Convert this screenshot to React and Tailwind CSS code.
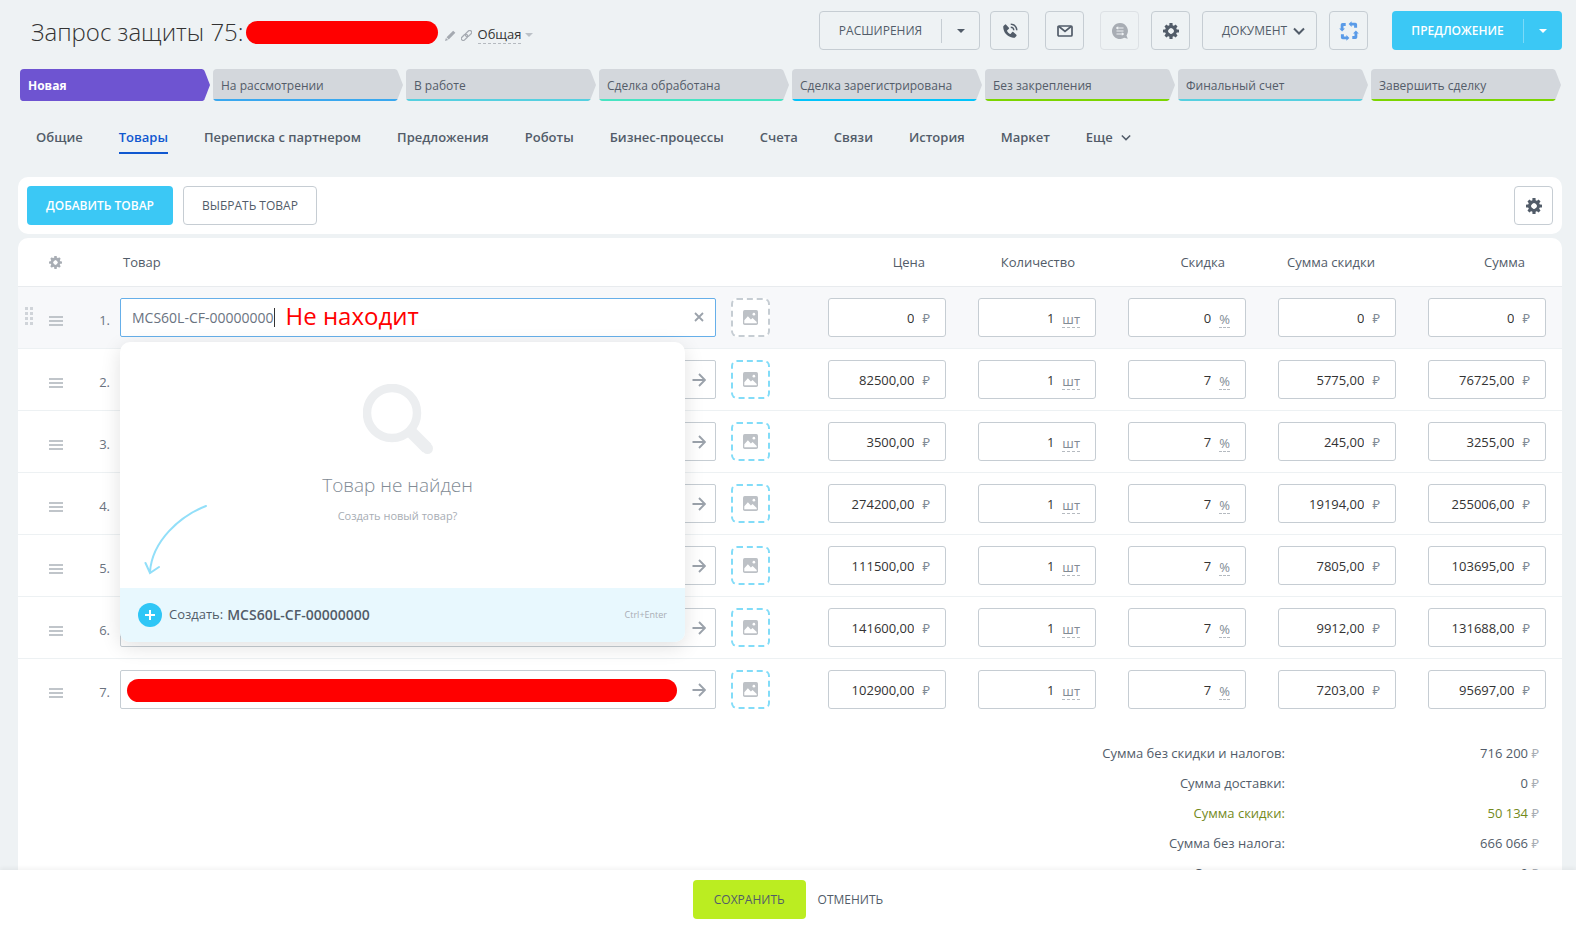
import { useState } from "react";
import { BiSolidPhoneCall } from "react-icons/bi";
import clsx from "clsx";

const stages = [
  { name: "Новая", color: "bg-[#6e54d1]", active: true },
  { name: "На рассмотрении", color: "bg-[#39a8ef]" },
  { name: "В работе", color: "bg-[#55d0e0]" },
  { name: "Сделка обработана", color: "bg-[#47e4c2]" },
  { name: "Сделка зарегистрирована", color: "bg-[#00c4fb]" },
  { name: "Без закрепления", color: "bg-[#7bd500]" },
  { name: "Финальный счет", color: "bg-[#55d0e0]" },
  { name: "Завершить сделку", color: "bg-[#7bd500]" },
];

const tabs = [
  "Общие",
  "Товары",
  "Переписка с партнером",
  "Предложения",
  "Роботы",
  "Бизнес-процессы",
  "Счета",
  "Связи",
  "История",
  "Маркет",
];

const rows = [
  { price: "0", count: "1", discount: "0", discountSum: "0", sum: "0" },
  { price: "82500,00", count: "1", discount: "7", discountSum: "5775,00", sum: "76725,00" },
  { price: "3500,00", count: "1", discount: "7", discountSum: "245,00", sum: "3255,00" },
  { price: "274200,00", count: "1", discount: "7", discountSum: "19194,00", sum: "255006,00" },
  { price: "111500,00", count: "1", discount: "7", discountSum: "7805,00", sum: "103695,00" },
  { price: "141600,00", count: "1", discount: "7", discountSum: "9912,00", sum: "131688,00" },
  { price: "102900,00", count: "1", discount: "7", discountSum: "7203,00", sum: "95697,00" },
];

const columns = [
  { key: "price", title: "Цена", unit: "₽" },
  { key: "count", title: "Количество", unit: "шт", select: true },
  { key: "discount", title: "Скидка", unit: "%", select: true },
  { key: "discountSum", title: "Сумма скидки", unit: "₽" },
  { key: "sum", title: "Сумма", unit: "₽" },
];

const totals = [
  { label: "Сумма без скидки и налогов:", value: "716 200" },
  { label: "Сумма доставки:", value: "0" },
  { label: "Сумма скидки:", value: "50 134", green: true },
  { label: "Сумма без налога:", value: "666 066" },
  { label: "Сумма налога:", value: "0" },
];

const Gear = ({ className }) => (
  <svg viewBox="0 0 16 16" className={className} fill="currentColor">
    {[0, 45, 90, 135].map((angle) => (
      <rect key={angle} x="6.4" y="0" width="3.2" height="16" rx="0.6" transform={`rotate(${angle} 8 8)`} mask="url(#gear-hole)" />
    ))}
    <mask id="gear-hole">
      <rect width="16" height="16" fill="white" />
      <circle cx="8" cy="8" r="3" fill="black" />
    </mask>
    <circle cx="8" cy="8" r="4.5" fill="none" stroke="currentColor" strokeWidth="3" />
  </svg>
);

const Caret = ({ className }) => (
  <svg viewBox="0 0 8 4" className={className} fill="currentColor">
    <path d="M0 0h8L4 4z" />
  </svg>
);

const Chevron = ({ className, width = 2 }) => (
  <svg viewBox="0 0 12 8" className={className} fill="none" stroke="currentColor" strokeWidth={width}>
    <path d="M1 1.5l5 5 5-5" />
  </svg>
);

const MailIcon = () => (
  <svg viewBox="0 0 16 12" className="w-4 h-3" fill="none" stroke="currentColor" strokeWidth="1.7">
    <rect x="1" y="1" width="14" height="10" rx="1" />
    <path d="M2 1.5l6 5 6-5" />
  </svg>
);

const ChatIcon = () => (
  <svg viewBox="0 0 16 16" className="w-4 h-4">
    <path d="M8 0a8 8 0 1 0 4.2 14.8l3.6.9-1.3-3.2A8 8 0 0 0 8 0z" fill="#a8adb4" />
    <path d="M4.5 5h7M4.5 8h7M4.5 11h7" fill="none" stroke="#eef2f4" strokeWidth="1.1" />
    <path d="M6.2 3.3v3.4L3.8 5zM9.8 9.3v3.4l2.4-1.7z" fill="#eef2f4" />
  </svg>
);

const SyncIcon = () => (
  <svg viewBox="0 0 20 20" className="w-5 h-5">
    {[0, 90, 180, 270].map((angle) => (
      <g key={angle} transform={`rotate(${angle} 10 10)`} fill="#5a9be8">
        <path d="M12 1.7h4.3a1.8 1.8 0 0 1 1.8 1.8v3.2h-3V4.5H12z" />
        <path d="M12.6 0.2v5.8L9.6 3.1z" />
      </g>
    ))}
  </svg>
);

const PhotoIcon = () => (
  <svg viewBox="0 0 16 16" className="w-[15px] h-[15px]">
    <rect width="16" height="16" rx="1.8" fill="#bdc1c6" />
    <circle cx="11.6" cy="4.4" r="1.4" fill="#fff" />
    <path d="M1.4 14.2v-3.4L5.2 6.6l3.2 3.6 1.8-1.6 4.4 4.2v1.4z" fill="#fff" />
  </svg>
);

const ArrowRight = () => (
  <svg viewBox="0 0 14 14" className="w-[14px] h-[14px]" fill="none" stroke="#9ba2ab" strokeWidth="1.9">
    <path d="M0.5 7h12M7 1l6 6-6 6" />
  </svg>
);

const SquareButton = ({ label, className, children }) => (
  <button
    aria-label={label}
    className={clsx(
      "flex items-center justify-center w-[39px] h-[39px] border rounded-[4px] text-[#525c69]",
      className || "border-[#c6cdd3]"
    )}
  >
    {children}
  </button>
);

const Header = () => (
  <header className="flex items-start justify-between pt-[11px] pr-[14px] pl-[31px]">
    <div className="flex items-center h-[42px]">
      <h1 className="text-[24px] font-light text-[#333]">Запрос защиты 75:</h1>
      <span className="w-[192px] h-[23px] ml-[2px] bg-[#f00] rounded-full"></span>
      <div className="flex items-center mt-[6px] ml-[7px] text-[#a5aab1]">
        <svg viewBox="0 0 12 12" className="w-[11px] h-[11px]" fill="currentColor">
          <path d="M0 12l1-3.4L3.4 11zM1.7 7.9L8.9.7l2.4 2.4-7.2 7.2z" />
        </svg>
        <svg viewBox="0 0 12 12" className="w-[11px] h-[11px] ml-[5px]" fill="none" stroke="currentColor" strokeWidth="1.3">
          <rect x="4.2" y="1.8" width="8" height="4.2" rx="2.1" transform="rotate(-45 8.2 3.9)" />
          <rect x="-0.2" y="5.9" width="8" height="4.2" rx="2.1" transform="rotate(-45 3.8 8)" />
        </svg>
        <button className="ml-[6px] text-[13px] leading-[17px] text-[#333] border-b border-dashed border-[#b5bac0]">
          Общая
        </button>
        <Caret className="w-2 h-1 ml-1 text-[#bcc1c7]" />
      </div>
    </div>
    <div className="flex text-[12px] text-[#525c69]">
      <div className="flex items-center h-[39px] w-[161px] border border-[#c6cdd3] rounded-[4px]">
        <button className="flex-1 h-full">РАСШИРЕНИЯ</button>
        <span className="w-px h-6 bg-[#c6cdd3]"></span>
        <button aria-label="Список расширений" className="flex items-center justify-center w-[37px] h-full">
          <Caret className="w-2 h-1" />
        </button>
      </div>
      <div className="flex gap-4 ml-[10px]">
        <SquareButton label="Позвонить">
          <BiSolidPhoneCall className="w-[18px] h-[18px]" />
        </SquareButton>
        <SquareButton label="Написать">
          <MailIcon />
        </SquareButton>
        <SquareButton label="Чат" className="border-[#dde1e5]">
          <ChatIcon />
        </SquareButton>
      </div>
      <div className="flex gap-3 ml-3">
        <SquareButton label="Настройки">
          <Gear className="w-4 h-4" />
        </SquareButton>
        <button className="flex items-center justify-center gap-[6px] w-[115px] h-[39px] pl-2 border border-[#c6cdd3] rounded-[4px]">
          ДОКУМЕНТ
          <Chevron className="w-3 h-2" />
        </button>
        <SquareButton label="Синхронизация">
          <SyncIcon />
        </SquareButton>
      </div>
      <div className="flex items-center h-[39px] w-[170px] ml-6 font-semibold text-white bg-[#3bc8f5] rounded-[4px]">
        <button className="flex-1 h-full">ПРЕДЛОЖЕНИЕ</button>
        <span className="w-px h-6 bg-[#7bdaf8]"></span>
        <button aria-label="Другие документы" className="flex items-center justify-center w-[38px] h-full">
          <Caret className="w-2 h-1" />
        </button>
      </div>
    </div>
  </header>
);

const Stages = () => (
  <div className="grid grid-cols-8 gap-[3px] mt-4 pr-[15px] pl-5">
    {stages.map((stage) => (
      <button
        key={stage.name}
        className={clsx(
          "flex flex-col h-8 overflow-hidden text-[12px] text-left rounded-l-[4px]",
          "[clip-path:polygon(0_0,calc(100%_-_8px)_0,calc(100%_-_6px)_1px,calc(100%_-_5px)_3px,100%_50%,calc(100%_-_5px)_29px,calc(100%_-_6px)_31px,calc(100%_-_8px)_100%,0_100%)]",
          stage.active ? "bg-[#6e54d1] text-white font-bold" : "bg-[#d3d7dc] text-[#535c69] font-medium"
        )}
      >
        <span className="flex items-center flex-1 px-2 pt-1 whitespace-nowrap">{stage.name}</span>
        <span className={clsx("w-full h-[2px]", stage.color)}></span>
      </button>
    ))}
  </div>
);

const Tabs = () => (
  <nav className="flex gap-9 mt-[21px] pl-9 text-[13px] font-semibold leading-[30px] text-[#525c69]">
    {tabs.map((tab) => (
      <a
        key={tab}
        href="#"
        className={clsx("border-b-2", tab === "Товары" ? "border-[#1058d0] text-[#1058d0]" : "border-transparent")}
      >
        {tab}
      </a>
    ))}
    <button className="flex items-center gap-2 h-[30px]">
      Еще
      <Chevron className="w-[10px] h-[7px]" width={1.8} />
    </button>
  </nav>
);

const ProductPopup = ({ query }) => (
  <div className="absolute top-[43px] -left-px z-10 w-[565px] overflow-hidden bg-white rounded-[10px] shadow-[0_5px_20px_rgba(0,0,0,0.12)]">
    <div className="relative flex flex-col items-center h-[246px] pt-[42px] pr-[10px]">
      <svg viewBox="0 0 70 70" className="w-[70px] h-[70px]" fill="none" stroke="#eceef0">
        <circle cx="29" cy="29" r="25" strokeWidth="8.5" />
        <path d="M48 48L64 64" strokeWidth="12" />
        <path d="M60 60L64.5 64.5" strokeWidth="11" strokeLinecap="round" />
      </svg>
      <p className="mt-[18px] text-[19px] leading-[26px] font-light text-[#828b95]">Товар не найден</p>
      <p className="mt-[9px] text-[11px] leading-[18px] text-[#a8adb4]">Создать новый товар?</p>
      <svg
        viewBox="0 0 64 70"
        className="absolute left-6 top-[163px] w-16 h-[70px]"
        fill="none"
        stroke="#92dff9"
        strokeWidth="2"
        strokeLinecap="round"
      >
        <path d="M62 1C36 11 8 36 6 67M1.5 58L6 68l9-6" />
      </svg>
    </div>
    <button className="flex items-center w-full h-[54px] px-[18px] text-[13px] text-[#525c69] bg-[#e8f8fe]">
      <span className="flex items-center justify-center w-6 h-6 mr-[7px] bg-[#2fc6f6] rounded-full">
        <svg viewBox="0 0 10 10" className="w-[10px] h-[10px]" stroke="#fff" strokeWidth="2">
          <path d="M5 0v10M0 5h10" />
        </svg>
      </span>
      Создать:<b className="ml-1 text-[14px] font-semibold">{query}</b>
      <span className="ml-auto text-[9px] text-[#a8adb4]">Ctrl+Enter</span>
    </button>
  </div>
);

const ProductCell = ({ index }) => {
  const [query, setQuery] = useState("MCS60L-CF-00000000");
  const first = index === 0;

  return (
    <div className="flex items-center pr-[42px]">
      <div
        className={clsx(
          "relative flex items-center flex-1 h-[39px] bg-white border rounded-[2px]",
          first ? "pl-[11px] border-[#66afe9]" : "pt-[2px] pl-[6px] border-[#c6cdd3]"
        )}
      >
        {first ? (
          <>
            <input
              aria-label="Товар 1"
              value={query}
              onChange={(e) => setQuery(e.target.value)}
              className="field-sizing-content text-[14px] text-[#6a737f] outline-none"
            />
            <span className="w-px h-[19px] bg-[#333]"></span>
            <span className="pb-[2px] ml-[11px] text-[24px] leading-[30px] text-[#f00]">Не находит</span>
          </>
        ) : (
          <span className={clsx("w-[550px] h-[23px] rounded-full", index === 6 && "bg-[#f00]")}></span>
        )}
        <button aria-label={first ? "Очистить" : "Открыть товар"} className="flex justify-center w-[14px] mr-[9px] ml-auto">
          {first ? (
            <svg viewBox="0 0 10 10" className="w-[10px] h-[10px]" stroke="#9ba2ab" strokeWidth="1.8">
              <path d="M1 1l8 8M9 1L1 9" />
            </svg>
          ) : (
            <ArrowRight />
          )}
        </button>
        {first && <ProductPopup query={query} />}
      </div>
      <button
        aria-label="Фото товара"
        className={clsx(
          "flex items-center justify-center w-[39px] h-[39px] ml-[15px] bg-white border-2 border-dashed rounded-[6px]",
          first ? "border-[#c6cdd3]" : "border-[#82dcf8]"
        )}
      >
        <PhotoIcon />
      </button>
    </div>
  );
};

const NumberField = ({ label, value, column }) => (
  <div className="flex items-center h-[39px] pt-[3px] pr-[15px] bg-white border border-[#c6cdd3] rounded-[3px]">
    <input
      aria-label={label}
      defaultValue={value}
      className="flex-1 w-0 min-w-0 text-[13px] text-right text-[#333] outline-none"
    />
    {column.select ? (
      <button className="mt-px ml-2 text-[13px] leading-[16px] text-[#828b95] border-b border-dashed border-[#b5bac0]">
        {column.unit}
      </button>
    ) : (
      <span className="ml-2 text-[13px] text-[#828b95]">{column.unit}</span>
    )}
  </div>
);

const ProductTable = () => (
  <section className="mt-1 bg-white rounded-t-[10px]">
    <table className="w-full table-fixed">
      <colgroup>
        <col className="w-[102px]" />
        <col />
        {columns.map((column) => (
          <col key={column.key} className="w-[150px]" />
        ))}
      </colgroup>
      <thead>
        <tr className="h-12 text-[13px] text-[#525c69] border-b border-[#e8ebee]">
          <th className="pt-px pl-[31px]">
            <button aria-label="Настройка колонок" className="block text-[#a8adb4]">
              <Gear className="w-[13px] h-[13px]" />
            </button>
          </th>
          <th className="pt-[2px] pl-[3px] font-normal text-left">Товар</th>
          {columns.map((column) => (
            <th key={column.key} className="pt-[2px] pr-[37px] font-normal text-right whitespace-nowrap">
              {column.title}
            </th>
          ))}
        </tr>
      </thead>
      <tbody>
        {rows.map((row, index) => (
          <tr
            key={index}
            className={clsx("h-[62px]", index === 0 && "bg-[#f7f8fa]", index < 6 && "border-b border-[#edf1f3]")}
          >
            <td className="pr-[10px]">
              <div className="flex items-center pt-[7px]">
                <span className="w-[31px] pb-[9px] pl-[7px]">
                  {index === 0 && (
                    <svg viewBox="0 0 8 18" className="w-2 h-[18px]" fill="#d0d4d9">
                      {[0, 5, 10, 15].map((y) => (
                        <path key={y} d={`M0 ${y}h3v3h-3zM5 ${y}h3v3h-3z`} />
                      ))}
                    </svg>
                  )}
                </span>
                <button aria-label="Меню строки">
                  <svg viewBox="0 0 14 10" className="w-[14px] h-[10px]" fill="#c0c5ca">
                    <path d="M0 0h14v2H0zM0 4h14v2H0zM0 8h14v2H0z" />
                  </svg>
                </button>
                <span className="ml-auto text-[13px] text-[#6a737f]">{index + 1}.</span>
              </div>
            </td>
            <td>
              <ProductCell index={index} />
            </td>
            {columns.map((column) => (
              <td key={column.key} className="px-4">
                <NumberField label={`${column.title} ${index + 1}`} value={row[column.key]} column={column} />
              </td>
            ))}
          </tr>
        ))}
      </tbody>
    </table>
    <dl className="pt-[18px] pb-6 pr-[23px] text-[13px] text-[#525c69]">
      {totals.map((total) => (
        <div key={total.label} className={clsx("flex justify-end leading-[30px]", total.green && "text-[#748a1b]")}>
          <dt>{total.label}</dt>
          <dd className="w-[254px] text-right">
            {total.value} <span className="text-[#a8adb4]">₽</span>
          </dd>
        </div>
      ))}
    </dl>
  </section>
);

const App = () => {
  return (
    <div className="flex flex-col h-screen overflow-hidden bg-[#eef2f4] font-['Open_Sans','Noto_Sans',sans-serif]">
      <div className="flex-1 min-h-0 overflow-hidden">
        <Header />
        <Stages />
        <Tabs />
        <main className="mt-[23px] mr-[14px] ml-[18px]">
          <section className="flex items-center h-[57px] px-[9px] text-[12px] text-[#525c69] bg-white rounded-[10px]">
            <button className="h-[39px] px-[19px] font-semibold text-white bg-[#3bc8f5] rounded-[4px]">
              ДОБАВИТЬ ТОВАР
            </button>
            <button className="h-[39px] px-[18px] ml-[10px] border border-[#c6cdd3] rounded-[4px]">
              ВЫБРАТЬ ТОВАР
            </button>
            <SquareButton label="Настройки таблицы" className="ml-auto border-[#c6cdd3]">
              <Gear className="w-4 h-4" />
            </SquareButton>
          </section>
          <ProductTable />
        </main>
      </div>
      <footer className="relative flex items-center justify-center gap-3 h-14 pt-[3px] text-[12px] text-[#525c69] bg-white shadow-[0_-2px_4px_rgba(0,0,0,0.05)]">
        <button className="h-[39px] px-[21px] bg-[#bbed21] rounded-[4px]">СОХРАНИТЬ</button>
        <button className="h-[39px]">ОТМЕНИТЬ</button>
      </footer>
    </div>
  );
};

export default App;
